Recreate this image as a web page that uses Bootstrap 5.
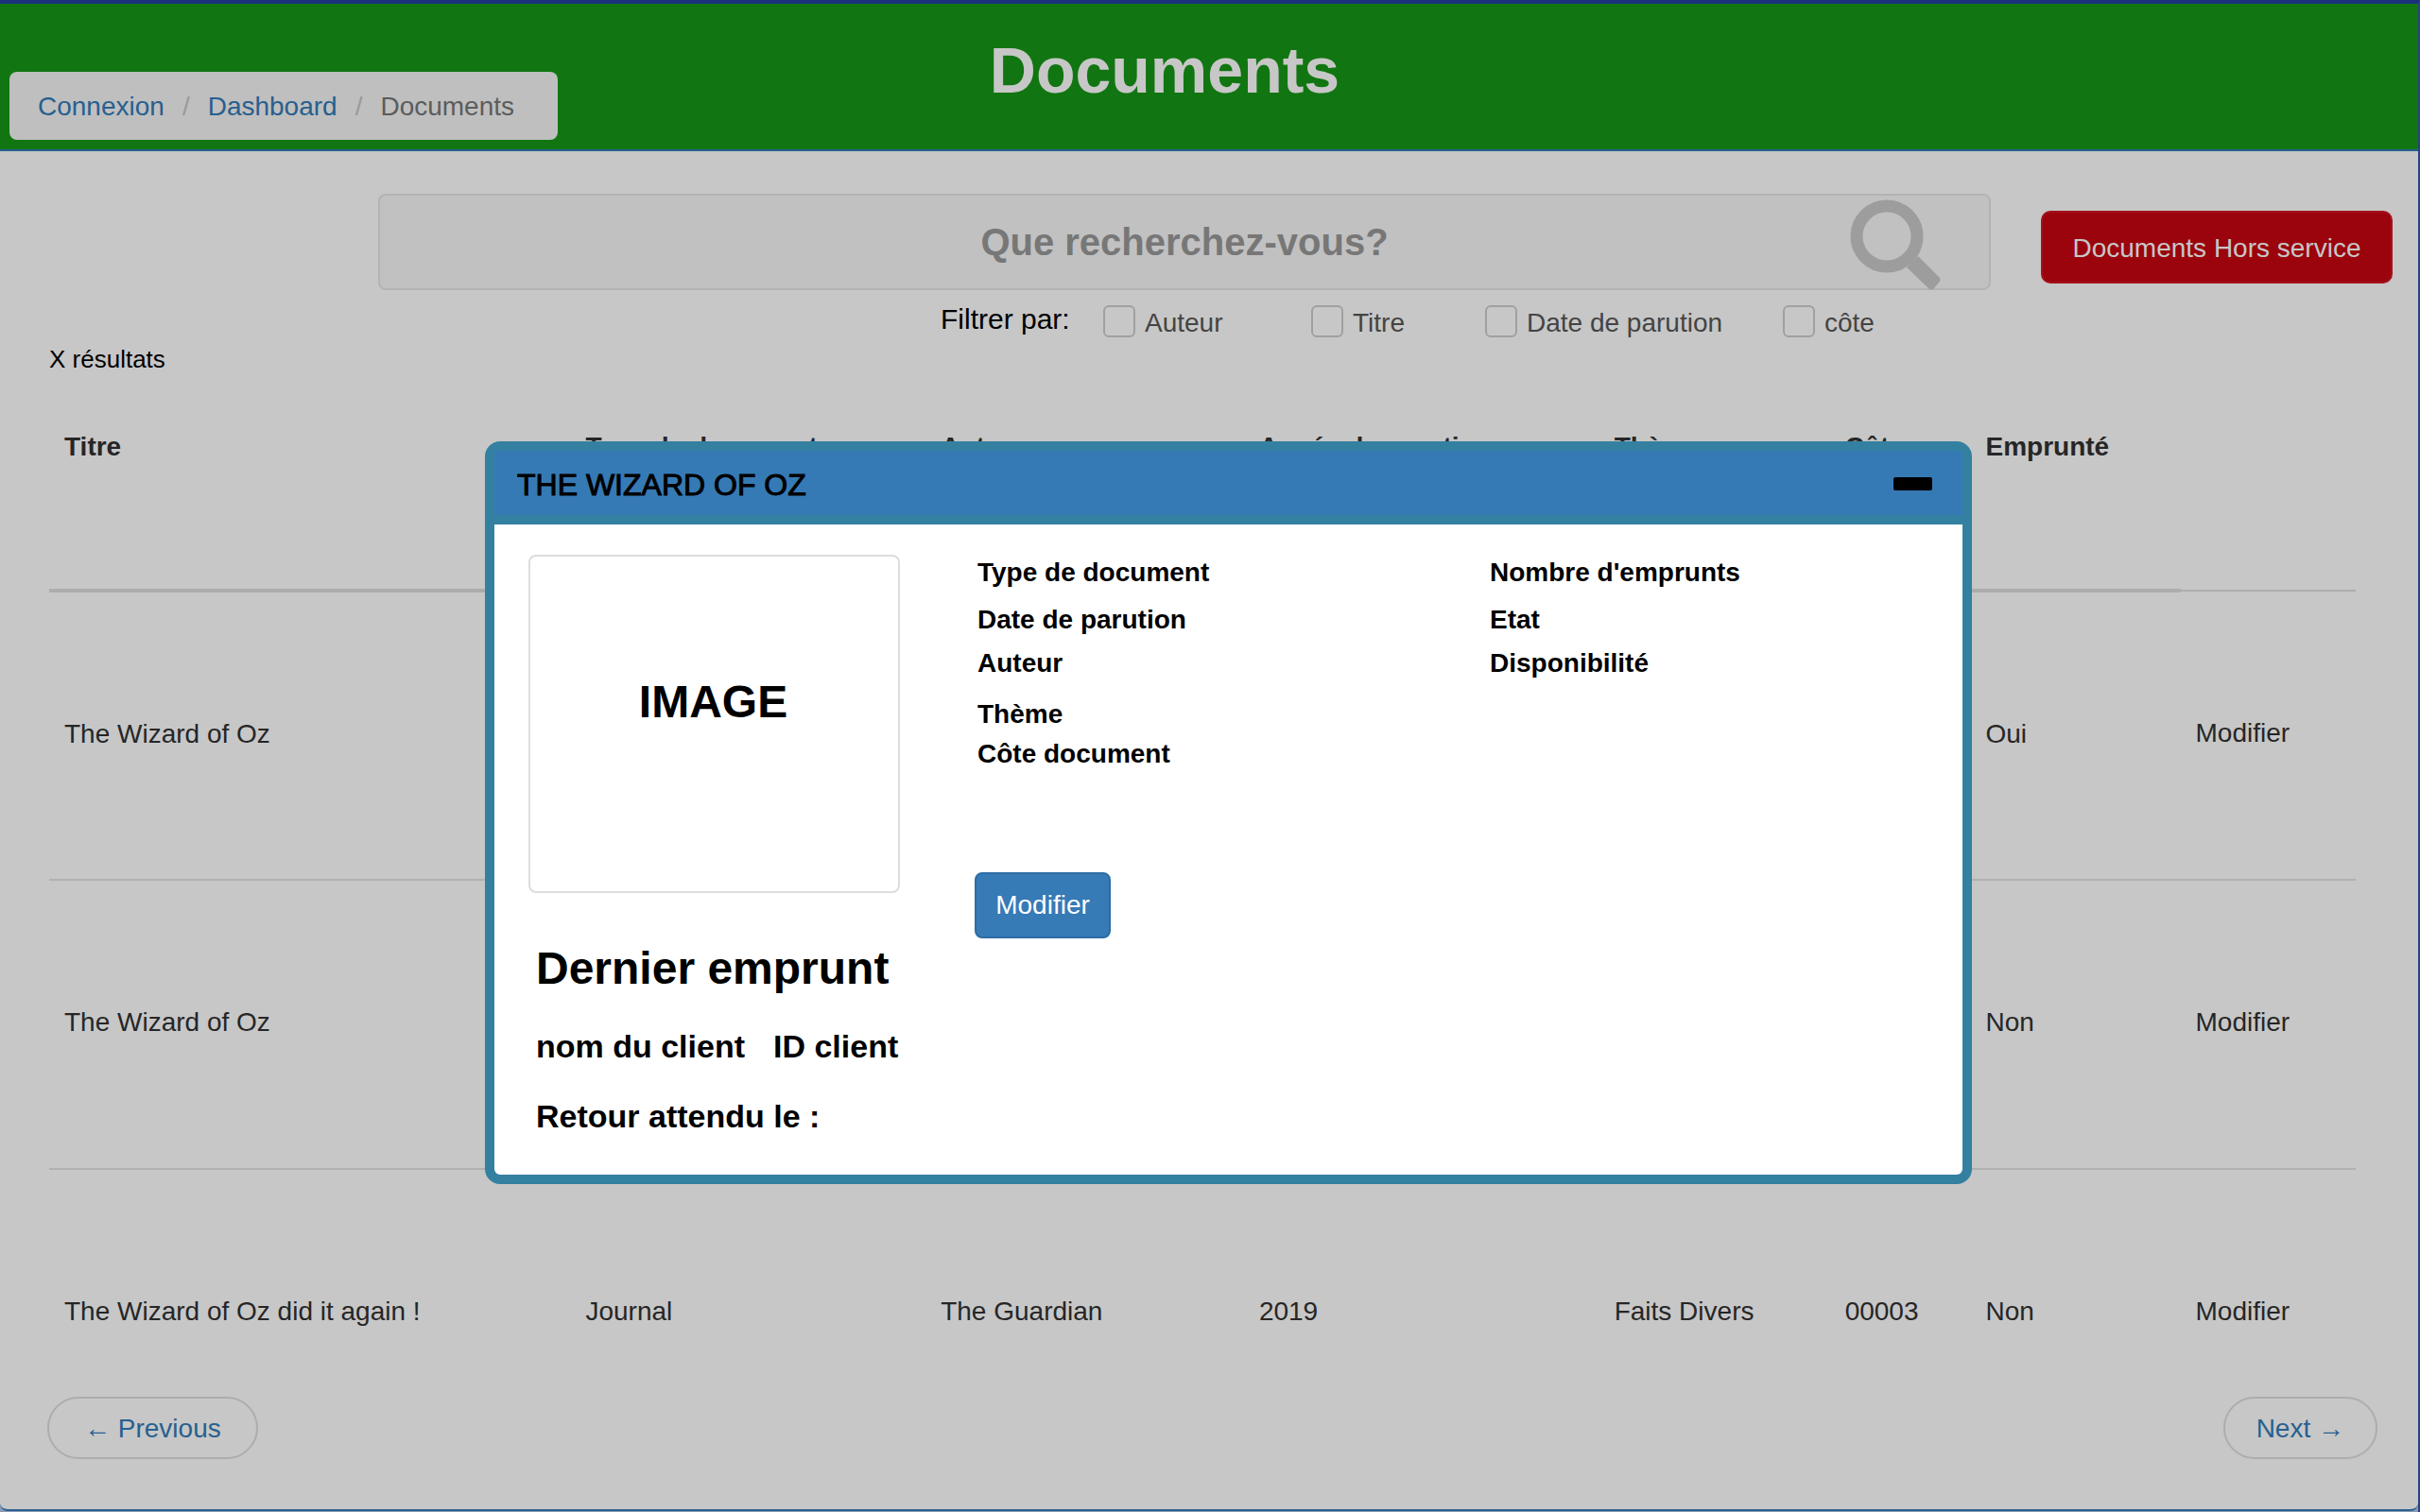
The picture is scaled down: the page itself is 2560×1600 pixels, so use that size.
<!DOCTYPE html>
<html lang="fr">
<head>
<meta charset="utf-8">
<meta name="viewport" content="width=device-width, initial-scale=1">
<title>Documents</title>
<link href="https://cdn.jsdelivr.net/npm/bootstrap@5.3.0/dist/css/bootstrap.min.css" rel="stylesheet">
<style>
  html, body { height: 100%; }
  body { font-family: "Liberation Sans", Arial, sans-serif; font-size: 28px; line-height: 40px; color: #262626; background: #8a9bb3; overflow: hidden; }
  .app-shell { height: 100%; padding-bottom: 1px; border-top: 4px solid #1c307e; border-right: 2px solid #2b3f83; }
  .app-panel { background: #c7c7c7; border-bottom: 2px solid #2a6091; border-radius: 0 0 8px 8px; }
  .app-header { display: grid; grid-template-columns: 590px 1fr 684px; background: #117611; border-bottom: 2px solid #265f8f; height: 156px; }
  .app-header h1 { font-size: 68px; line-height: 80px; font-weight: 700; color: #c7c7c7; margin: 30px 0 0; }
  .crumb-box { background: #bfbfbf; border-radius: 8px; height: 72px; margin: 72px 0 0 10px; padding: 17px 30px; }
  .crumb-box .breadcrumb-item + .breadcrumb-item { padding-left: 19px; }
  .crumb-box .breadcrumb-item + .breadcrumb-item::before { color: #9a9a9a; padding-right: 19px; }
  .crumb-box .breadcrumb-item.active { color: #5c5c5c; }
  .blue-link, .blue-link:hover { color: #27608f; text-decoration: none; }
  .search-row { display: grid; grid-template-columns: 1fr 372px; column-gap: 53px; padding: 45px 27px 0 400px; }
  .search-box { position: relative; }
  .search-box .form-control { height: 102px; border: 2px solid #b3b3b3; border-radius: 8px; background: #c1c1c1; text-align: center; font-size: 40px; font-weight: 700; padding: 0; }
  .search-box .form-control::placeholder { color: #777; opacity: 1; }
  .search-box svg { position: absolute; right: 52px; top: 4px; width: 100px; height: 100px; }
  .btn-hors { margin-top: 18px; height: 77px; border: 2px solid #a3121b; border-radius: 10px; background: #9c040d; color: #c7c7c7; font-size: 28px; padding: 2px 0 0; }
  .filter-row { display: grid; grid-template-columns: 172px 220px 184px 315px auto; justify-content: start; padding: 14px 0 0 995px; height: 53px; }
  .filter-row .filter-title { font-size: 30px; line-height: 34px; color: #000; }
  .filter-row .form-check { display: flex; align-items: flex-start; gap: 10px; padding: 2px 0 0; margin: 0; min-height: 0; white-space: nowrap; color: #444; line-height: 38px; }
  .filter-row .form-check-input { float: none; margin: 0; width: 34px; height: 34px; border: 2px solid #a0a0a0; border-radius: 6px; background: transparent; }
  .result-count { font-size: 26px; color: #000; padding-left: 52px; margin: 0; }
  .doc-table { width: auto; margin: 37px 66px 0 52px; }
  .doc-table table { table-layout: fixed; width: 100%; margin: 0; --bs-table-bg: transparent; --bs-table-color: #262626; color: #262626; }
  .doc-table th, .doc-table td { padding: 16px; border: 0; white-space: nowrap; color: #262626; }
  .doc-table thead th { height: 188px; vertical-align: top; border-bottom: 4px solid #adadad; }
  .doc-table thead td { border-bottom: 2px solid #adadad; }
  .doc-table tbody td { height: 306px; vertical-align: middle; border-bottom: 2px solid #b1b1b1; padding: 14px 16px 18px; }
  .doc-table tbody tr:last-child td { height: 304px; border-bottom: 0; }
  .pager-row { display: flex; justify-content: space-between; margin: -63px 43px 0 50px; height: 119px; }
  .pager-pill { height: 66px; border: 2px solid #adadad; border-radius: 33px; padding: 12px 37px; }
  .pager-pill.is-next { padding: 12px 33px; }

  .doc-dialog { position: absolute; left: 513px; right: 474px; top: 467px; height: 786px; background: #fff; border: 10px solid #3480a0; border-radius: 16px; color: #000; }
  .dialog-head { display: flex; justify-content: space-between; align-items: center; height: 78px; background: #367ab5; border-bottom: 10px solid #3480a0; padding: 0 32px 0 24px; }
  .dialog-head h2 { font-size: 32px; line-height: 40px; font-weight: 400; -webkit-text-stroke: 1px #000; margin: 4px 0 0; }
  .minus-btn { border: 0; background: transparent; padding: 15px 0 13px; line-height: 0; }
  .dialog-body { display: grid; grid-template-columns: 473px 542px 1fr; padding: 32px 32px 0 36px; font-weight: 700; }
  .cover-box { width: 393px; height: 358px; border: 2px solid #ddd; border-radius: 8px; display: flex; align-items: center; justify-content: center; font-size: 48px; padding: 0 2px 46px 0; }
  .meta-list { display: grid; grid-template-rows: 50px 46px 54px 42px; align-content: start; padding-left: 2px; list-style: none; margin: -1px 0 0; height: 337px; }
  .btn-edit { width: 144px; height: 70px; background: #367ab6; border: 2px solid #2e6da4; border-radius: 8px; color: #fff; font-size: 28px; margin-left: -1px; padding: 0; }
  .loan-box { padding: 0 0 0 44px; font-weight: 700; font-size: 34px; }
  .loan-box h3 { font-size: 48px; line-height: 64px; font-weight: 700; margin: 0 0 30px; }
  .loan-box p { margin: 0 0 34px; column-gap: 30px; }
</style>
<script src="https://cdn.jsdelivr.net/npm/bootstrap@5.3.0/dist/js/bootstrap.bundle.min.js"></script>
</head>
<body>
<div class="app-shell">
  <main class="app-panel">
    <header class="app-header">
      <nav class="crumb-box" aria-label="Fil d'Ariane">
        <ol class="breadcrumb m-0 flex-nowrap">
          <li class="breadcrumb-item"><a class="blue-link" href="#">Connexion</a></li>
          <li class="breadcrumb-item"><a class="blue-link" href="#">Dashboard</a></li>
          <li class="breadcrumb-item active" aria-current="page">Documents</li>
        </ol>
      </nav>
      <h1 class="text-center">Documents</h1>
    </header>

    <form>
      <div class="search-row">
        <div class="search-box">
          <input class="form-control" type="text" placeholder="Que recherchez-vous?" aria-label="Que recherchez-vous?">
          <svg viewBox="0 0 100 100" aria-hidden="true">
            <circle cx="42" cy="41" r="32" fill="none" stroke="#9d9d9d" stroke-width="13"/>
            <path d="M75 62 L97 84 Q100 87 97 90 L92 96 Q89 99 86 96 L63 74 Z" fill="#9d9d9d"/>
          </svg>
        </div>
        <button type="button" class="btn btn-hors">Documents Hors service</button>
      </div>
      <div class="filter-row">
        <span class="filter-title">Filtrer par:</span>
        <div class="form-check"><input class="form-check-input" type="checkbox" id="f-auteur"><label for="f-auteur">Auteur</label></div>
        <div class="form-check"><input class="form-check-input" type="checkbox" id="f-titre"><label for="f-titre">Titre</label></div>
        <div class="form-check"><input class="form-check-input" type="checkbox" id="f-date"><label for="f-date">Date de parution</label></div>
        <div class="form-check"><input class="form-check-input" type="checkbox" id="f-cote"><label for="f-cote">côte</label></div>
      </div>
    </form>

    <p class="result-count">X résultats</p>

    <div class="doc-table">
      <table class="table">
        <colgroup>
          <col style="width:22.6%"><col style="width:15.4%"><col style="width:13.8%"><col style="width:15.4%">
          <col style="width:10%"><col style="width:6.1%"><col style="width:9.1%"><col style="width:7.6%">
        </colgroup>
        <thead>
          <tr><th>Titre</th><th>Type de document</th><th>Auteur</th><th>Année de parution</th><th>Thème</th><th>Côte</th><th>Emprunté</th><td></td></tr>
        </thead>
        <tbody>
          <tr><td>The Wizard of Oz</td><td></td><td></td><td></td><td></td><td></td><td>Oui</td><td>Modifier</td></tr>
          <tr><td>The Wizard of Oz</td><td></td><td></td><td></td><td></td><td></td><td>Non</td><td>Modifier</td></tr>
          <tr><td>The Wizard of Oz did it again !</td><td>Journal</td><td>The Guardian</td><td>2019</td><td>Faits Divers</td><td>00003</td><td>Non</td><td>Modifier</td></tr>
        </tbody>
      </table>
    </div>

    <nav class="pager-row" aria-label="Pages">
      <a class="pager-pill blue-link" href="#">← Previous</a>
      <a class="pager-pill is-next blue-link" href="#">Next →</a>
    </nav>
  </main>
</div>

<section class="doc-dialog" role="dialog" aria-labelledby="dlg-title">
  <div class="dialog-head">
    <h2 id="dlg-title">THE WIZARD OF OZ</h2>
    <button type="button" class="minus-btn" aria-label="Réduire"><svg width="41" height="14" viewBox="0 0 41 14"><rect width="41" height="14" rx="2"/></svg></button>
  </div>
  <div class="dialog-body">
    <div class="cover-box">IMAGE</div>
    <div>
      <ul class="meta-list"><li>Type de document</li><li>Date de parution</li><li>Auteur</li><li>Thème</li><li>Côte document</li></ul>
      <button type="button" class="btn btn-edit">Modifier</button>
    </div>
    <ul class="meta-list"><li>Nombre d'emprunts</li><li>Etat</li><li>Disponibilité</li></ul>
  </div>
  <div class="loan-box">
    <h3>Dernier emprunt</h3>
    <p class="d-flex"><span>nom du client</span><span>ID client</span></p>
    <p>Retour attendu le :</p>
  </div>
</section>
</body>
</html>
